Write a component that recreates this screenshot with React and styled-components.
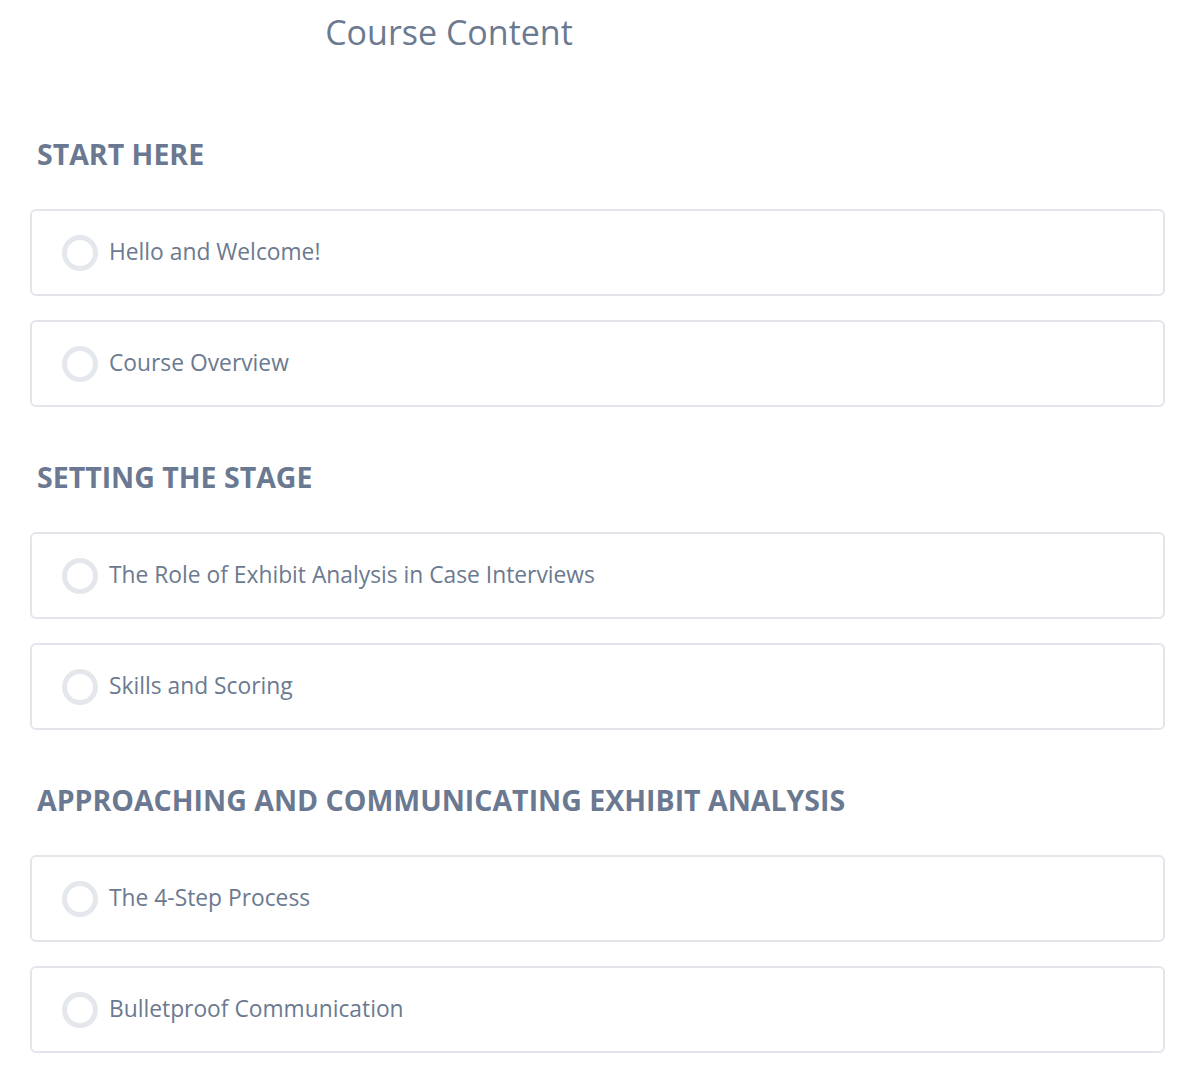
import styled, { createGlobalStyle } from "styled-components"

const GlobalStyle = createGlobalStyle`
    body {
        margin: 0;
        background: #fff;
        font-family: "Open Sans", "Noto Sans", sans-serif;
    }
`

const sections = [
    {
        title: "Start Here",
        lessons: ["Hello and Welcome!", "Course Overview"],
    },
    {
        title: "Setting the Stage",
        lessons: ["The Role of Exhibit Analysis in Case Interviews", "Skills and Scoring"],
    },
    {
        title: "Approaching and Communicating Exhibit Analysis",
        lessons: ["The 4-Step Process", "Bulletproof Communication"],
    },
]

const CourseContent = () => {
    return (
        <Page>
            <GlobalStyle />
            <Header>
                <Title>Course Content</Title>
            </Header>
            {sections.map((section) => (
                <Section key={section.title}>
                    <SectionTitle>{section.title}</SectionTitle>
                    <LessonList>
                        {section.lessons.map((lesson) => (
                            <Lesson key={lesson}>
                                <Status />
                                <LessonName>{lesson}</LessonName>
                            </Lesson>
                        ))}
                    </LessonList>
                </Section>
            ))}
        </Page>
    )
}

export default CourseContent

const Page = styled.main`
    width: 1135px;
    padding: 9px 33px 26px 30px;
    color: #6b7a90;
`

const Header = styled.header`
    width: 838px;
    text-align: center;
`

const Title = styled.h1`
    margin: 0;
    font-size: 34px;
    line-height: 46px;
    font-weight: 400;
`

const Section = styled.section`
    margin-top: 52px;

    &:first-of-type {
        margin-top: 81px;
    }
`

const SectionTitle = styled.h2`
    margin: 0 0 37px 7px;
    font-size: 28.5px;
    line-height: 36px;
    font-weight: 700;
    text-transform: uppercase;
    color: #6a7891;
`

const LessonList = styled.div`
    display: flex;
    flex-direction: column;
    gap: 24px;
`

const Lesson = styled.div`
    box-sizing: border-box;
    height: 87px;
    display: flex;
    align-items: center;
    gap: 11px;
    padding-left: 30px;
    border: 2px solid #e2e6eb;
    border-radius: 6px;
    background: #fff;
`

const Status = styled.span`
    box-sizing: border-box;
    width: 36px;
    height: 36px;
    flex-shrink: 0;
    border: 5px solid #e4e7ec;
    border-radius: 50%;
`

const LessonName = styled.span`
    margin-top: -1px;
    font-size: 22.8px;
    line-height: 30px;
    color: #6b7a90;
`
